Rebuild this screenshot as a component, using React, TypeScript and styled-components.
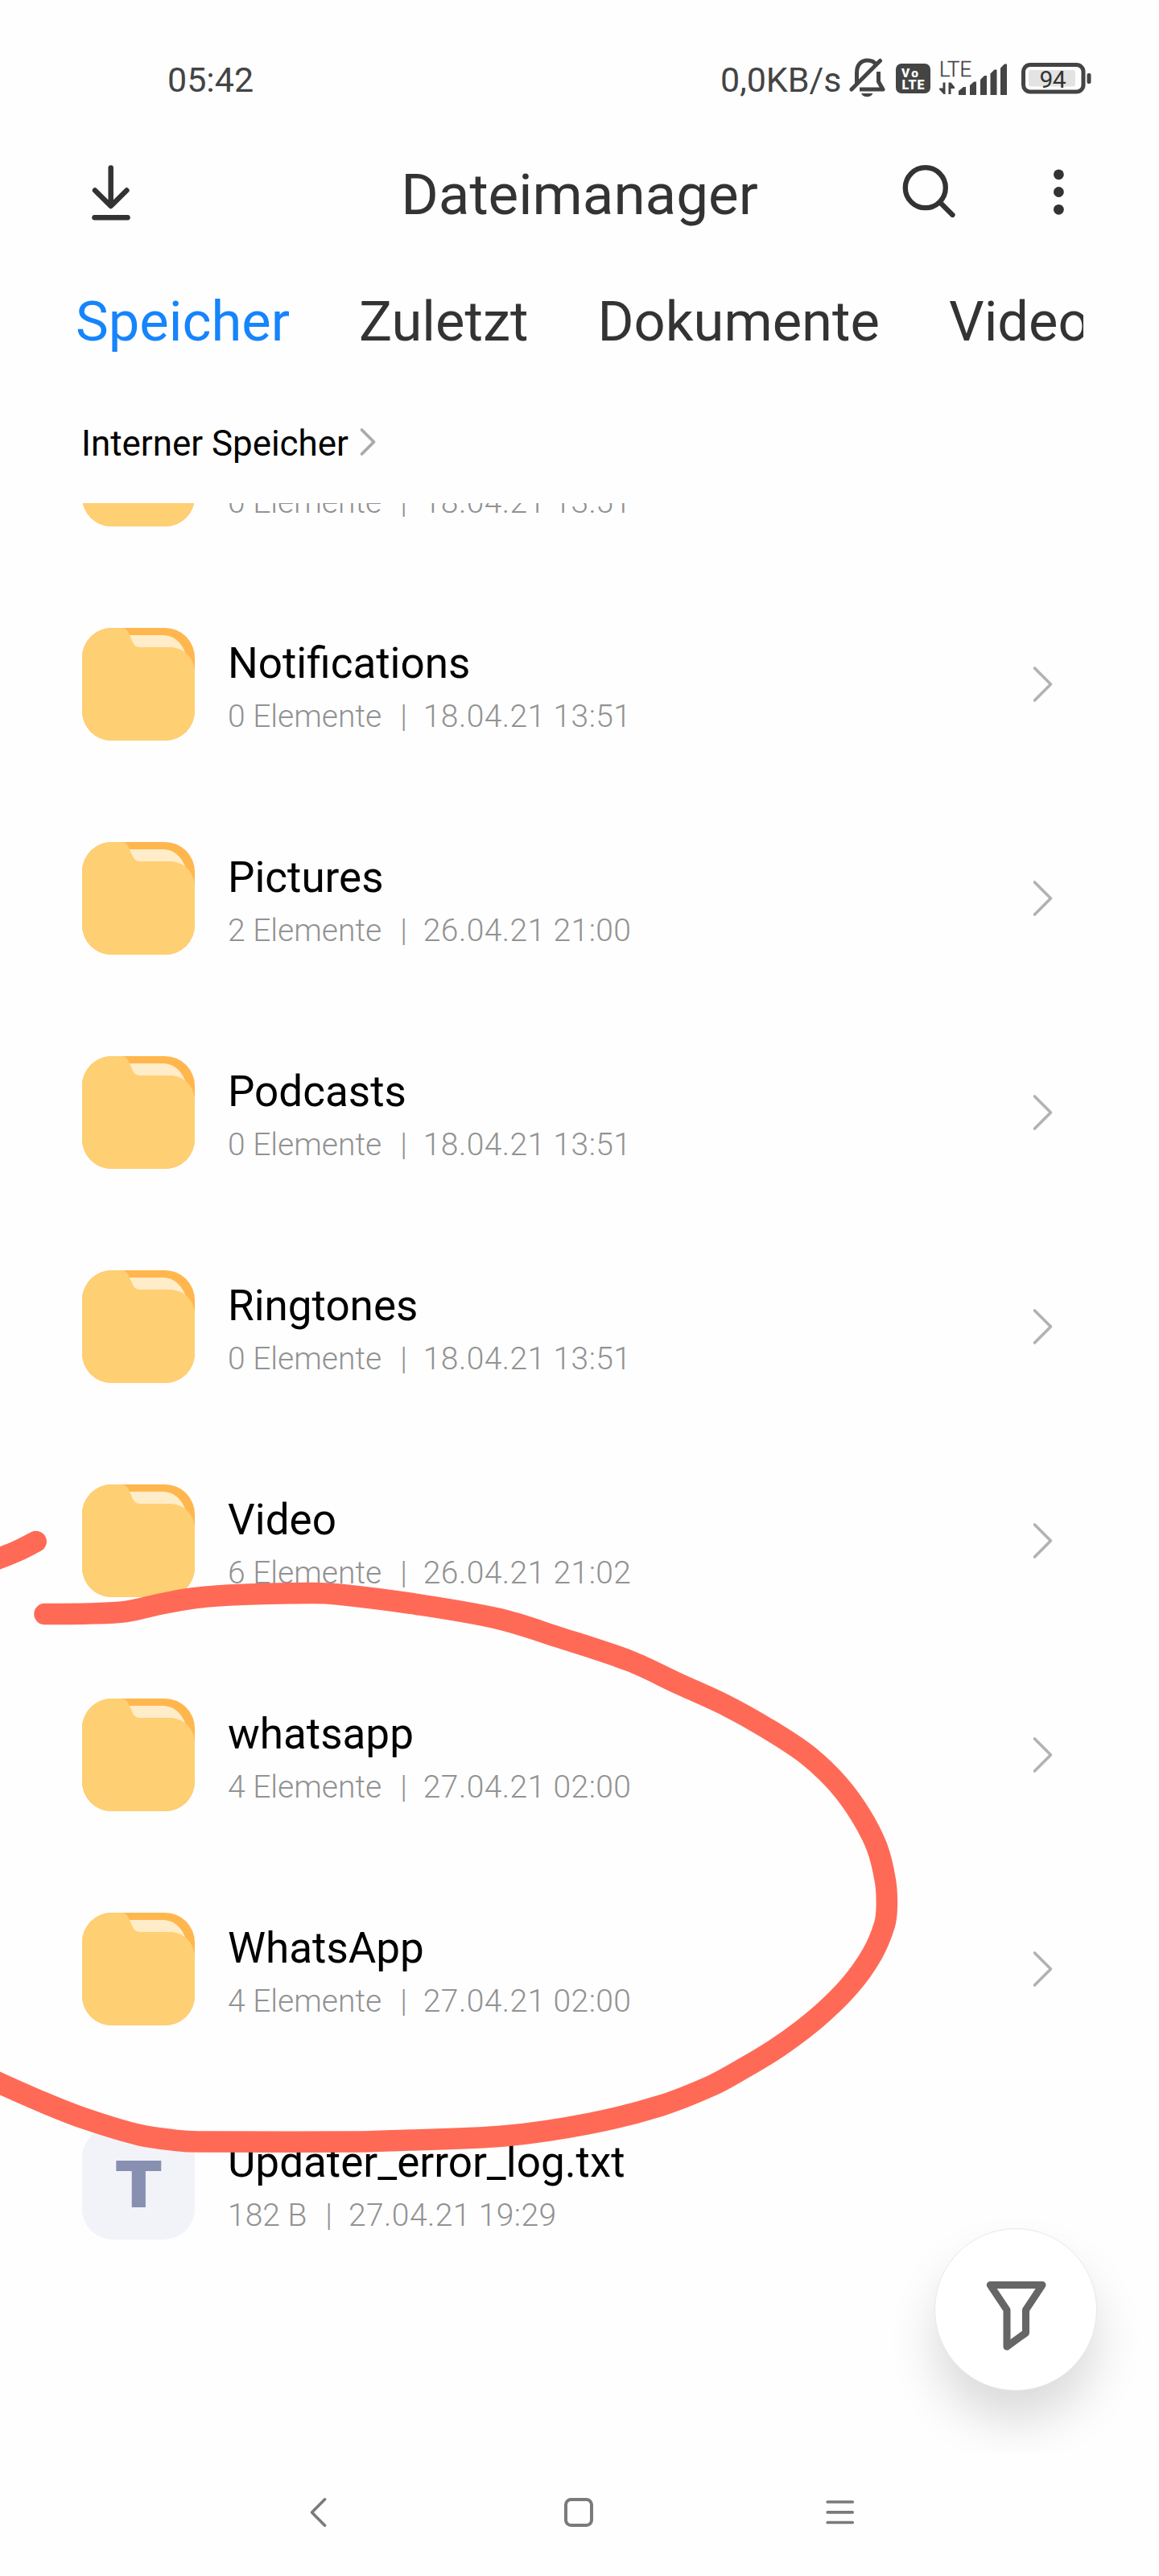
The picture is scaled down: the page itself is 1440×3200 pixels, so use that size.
import React from "react";
import styled, { createGlobalStyle } from "styled-components";

const GlobalStyle = createGlobalStyle`
  body {
    margin: 0;
    background: #fefefe;
  }
  * {
    box-sizing: border-box;
  }
`;

const Screen = styled.main`
  position: relative;
  display: flex;
  flex-direction: column;
  width: 1440px;
  height: 3200px;
  overflow: hidden;
  background: #fefefe;
  font-family: Roboto, "Liberation Sans", sans-serif;
  color: #333;

  svg {
    display: block;
    flex: none;
  }
`;

const StatusBar = styled.header`
  display: flex;
  align-items: center;
  justify-content: space-between;
  height: 160px;
  padding: 34px 84px 0 208px;
  color: #444;
`;

const StatusText = styled.span<{ $width?: number }>`
  width: ${(p) => (p.$width ? `${p.$width}px` : "auto")};
  padding-top: 4px;
  font-size: 43px;
  line-height: 52px;
  white-space: nowrap;
`;

const StatusIcons = styled.div`
  display: flex;
  align-items: center;
`;

const Spacer = styled.i<{ $width: number }>`
  width: ${(p) => p.$width}px;
`;

const AppBar = styled.div`
  display: grid;
  grid-template-columns: 1fr auto 1fr;
  align-items: center;
  height: 160px;
  padding: 0 87px;
`;

const AppBarStart = styled.div`
  padding-left: 13px;
`;

const AppBarEnd = styled.div`
  display: flex;
  justify-content: flex-end;
  gap: 86px;
`;

const Title = styled.h1`
  margin: 0;
  padding-top: 4px;
  font-size: 71px;
  font-weight: 400;
  line-height: 84px;
`;

const Tabs = styled.nav`
  display: flex;
  align-items: center;
  gap: 86px;
  height: 160px;
  margin: 0 94px 0 94px;
  overflow: hidden;
`;

const Tab = styled.span<{ $active?: boolean }>`
  flex: none;
  font-size: 68.7px;
  line-height: 100px;
  color: ${(p) => (p.$active ? "#1684fc" : "#333")};
`;

const Breadcrumb = styled.div`
  display: flex;
  align-items: center;
  gap: 13px;
  height: 145px;
  padding: 0 101px 4px;
  font-size: 43.9px;
  line-height: 52px;
  color: #000;

  svg {
    margin-bottom: 4px;
  }
`;

const ListArea = styled.section`
  position: relative;
  height: 2423px;
  overflow: hidden;
`;

const FileList = styled.ul`
  margin: -174px 0 0;
  padding: 0;
  list-style: none;
`;

const Row = styled.li`
  display: flex;
  align-items: center;
  gap: 41px;
  height: 266px;
  padding: 0 130px 0 102px;
`;

const RowText = styled.div`
  flex: 1;
  height: 140px;
  padding-top: 11px;
`;

const Name = styled.div`
  height: 66px;
  margin-bottom: 8px;
  font-size: 53px;
  line-height: 66px;
  color: #000;
`;

const Meta = styled.div`
  display: flex;
  font-size: 39px;
  font-weight: 300;
  line-height: 50px;
  white-space: pre;
  color: #929292;
`;

const Divider = styled.span`
  margin: 0 20px 0 23px;
`;

const DateText = styled.span`
  letter-spacing: 0.42px;
`;

const TextFileIcon = styled.div`
  display: flex;
  align-items: center;
  justify-content: center;
  width: 140px;
  height: 140px;
  border-radius: 38px;
  background: #f2f3f8;
  color: #8890b2;

  span {
    padding-top: 5px;
    font: bold 77px/135px "DejaVu Sans", sans-serif;
    -webkit-text-stroke: 2px #8890b2;
    transform: scaleX(1.04);
  }
`;

const FilterButton = styled.button`
  position: absolute;
  right: 77.5px;
  bottom: 78px;
  display: flex;
  align-items: center;
  justify-content: center;
  width: 202px;
  height: 202px;
  padding: 16px 0 0;
  border: 1px solid #e8e8e8;
  border-radius: 50%;
  background: #fff;
  box-shadow: 0 38px 60px rgba(0, 0, 0, 0.14);
`;

const NavBar = styled.footer`
  display: flex;
  align-items: center;
  justify-content: space-between;
  height: 152px;
  padding: 0 376px 7px 375px;
`;

const Marker = styled.svg`
  position: absolute;
  inset: 0;
  pointer-events: none;
`;

const BellOff = () => (
  <svg width="46" height="50" viewBox="0 0 46 50" fill="none" stroke="#444" strokeWidth="5">
    <path d="M9.5 31V18.5C9.5 8 15.5 3 22.5 3c5 0 9 2 11 5" />
    <path d="M36.500 17v12.500L42 39H13" strokeLinejoin="round" />
    <path d="M3 39L38.500 3.500" strokeLinecap="round" />
    <path d="M15 44h14.500c-1.500 3-4 4.300-7.200 4.300S16.500 47 15 44z" fill="#444" stroke="none" />
  </svg>
);

const VoLte = () => (
  <svg width="43" height="37" viewBox="0 0 43 37" fill="#fff" fontFamily="Roboto, sans-serif" fontWeight="900">
    <rect width="43" height="37" rx="7" fill="#444" />
    <text x="7" y="17" fontSize="15.500" textLength="21">Vo</text>
    <text x="7.500" y="32" fontSize="16" textLength="28">LTE</text>
  </svg>
);

const Signal = () => (
  <svg width="84" height="44" viewBox="0 0 84 44" fill="#444">
    <text x="0" y="19.500" fontSize="25.500" fontWeight="300" fontFamily="Roboto, sans-serif" textLength="40" lengthAdjust="spacingAndGlyphs" stroke="#444" strokeWidth="0.400">LTE</text>
    <path d="M4.500 27.500h3V42H5.500L0 36v-1.500h4.500z" />
    <path d="M11.500 27.500H14.500L19 33v2h-4.500v7h-3z" />
    <path d="M24 43v-5l6-5h3v10z" />
    <path d="M38 43V31l5-4.500h3V43z" />
    <path d="M51 43V24l5-5h3v24z" />
    <path d="M63.500 43V16.500l5-5h3V43z" />
    <path d="M76 43V9.500l5-5h3V43z" />
  </svg>
);

const Battery = () => (
  <svg width="88" height="40" viewBox="0 0 88 40">
    <rect x="3.500" y="3.500" width="74.500" height="33.500" rx="8.500" fill="none" stroke="#444" strokeWidth="5" />
    <rect x="10" y="10" width="58" height="20.500" rx="3" fill="#e3e3e3" />
    <rect x="82.500" y="14" width="5" height="13" rx="2" fill="#444" />
    <text x="23.500" y="31.500" fontSize="30" fontFamily="Roboto, sans-serif" fill="#333" textLength="33">94</text>
  </svg>
);

const DownloadIcon = () => (
  <svg width="76" height="76" viewBox="0 0 76 76" fill="none" stroke="#333" strokeWidth="6.500" strokeLinecap="round">
    <path d="M37.700 6.500V53M18 34.500L37.700 54L57.400 34.500" strokeLinejoin="round" />
    <path d="M17.500 68.300h41" />
  </svg>
);

const SearchIcon = () => (
  <svg width="76" height="76" viewBox="0 0 76 76" fill="none" stroke="#333" strokeWidth="6.300" strokeLinecap="round">
    <circle cx="34.800" cy="31.200" r="25" />
    <path d="M53.500 50L68.500 65" />
  </svg>
);

const MoreIcon = () => (
  <svg width="76" height="76" viewBox="0 0 76 76" fill="#333">
    {[14.8, 36.5, 58.3].map((cy) => (
      <circle key={cy} cx="38.400" cy={cy} r="6.400" />
    ))}
  </svg>
);

const FolderIcon = () => (
  <svg width="140" height="140" viewBox="0 0 140 140">
    <rect width="140" height="140" rx="37" fill="#ffb74d" />
    <path d="M50 9H99C115 9 125 19 130 36L128 50H60z" fill="#ffecc9" />
    <path
      d="M37 0H48C54 0 56.500 3 59 9L62.500 17C65 22.500 68 24 74 24H109C123 24 137 33 140 52V103C140 123 123 140 103 140H37C17 140 0 123 0 103V37C0 17 17 0 37 0Z"
      fill="#ffcf73"
    />
  </svg>
);

const RowChevron = () => (
  <svg width="28" height="48" viewBox="0 0 28 48" fill="none" stroke="#b2b2b2" strokeWidth="3.600" strokeLinecap="round" strokeLinejoin="round">
    <path d="M3.500 4L23.500 24L3.500 44" />
  </svg>
);

const CrumbChevron = () => (
  <svg width="22" height="36" viewBox="0 0 22 36" fill="none" stroke="#aaa" strokeWidth="3.800" strokeLinecap="round" strokeLinejoin="round">
    <path d="M3.500 3L18.500 18L3.500 33" />
  </svg>
);

const FunnelIcon = () => (
  <svg width="80" height="90" viewBox="0 0 80 90" fill="none" stroke="#666" strokeWidth="9" strokeLinejoin="round">
    <path d="M8.300 6.500H73L52.500 37.500V66L29 83V37.500z" />
  </svg>
);

const NavBack = () => (
  <svg width="40" height="40" viewBox="0 0 40 40" fill="none" stroke="#7a7a7a" strokeWidth="3.600" strokeLinecap="round" strokeLinejoin="round">
    <path d="M28.600 3.800L12.500 20L28.600 36.200" />
  </svg>
);

const NavHome = () => (
  <svg width="40" height="40" viewBox="0 0 40 40" fill="none" stroke="#7a7a7a" strokeWidth="4">
    <rect x="3" y="4" width="32" height="32" rx="6.500" />
  </svg>
);

const NavMenu = () => (
  <svg width="40" height="40" viewBox="0 0 40 40" stroke="#7a7a7a" strokeWidth="3.700" strokeLinecap="round">
    <path d="M4.200 7h31M4.200 19.800h31M4.200 32.500h31" />
  </svg>
);

type Point = [number, number];

/** Catmull-Rom curve through the points, written as cubic segments. */
function smoothPath(points: Point[]): string {
  let d = `M${points[0][0]} ${points[0][1]}`;
  for (let i = 0; i < points.length - 1; i++) {
    const a = points[Math.max(i - 1, 0)];
    const b = points[i];
    const c = points[i + 1];
    const e = points[Math.min(i + 2, points.length - 1)];
    const len = Math.hypot(c[0] - b[0], c[1] - b[1]);
    const t1x = c[0] - a[0];
    const t1y = c[1] - a[1];
    const t2x = e[0] - b[0];
    const t2y = e[1] - b[1];
    const k1 = len / 3 / (Math.hypot(t1x, t1y) || 1);
    const k2 = len / 3 / (Math.hypot(t2x, t2y) || 1);
    d += `C${b[0] + t1x * k1} ${b[1] + t1y * k1} ${c[0] - t2x * k2} ${c[1] - t2y * k2} ${c[0]} ${c[1]}`;
  }
  return d;
}

const loop: Point[] = [
  [55.5, 2005], [110, 2004.5], [156, 2002], [202, 1992], [239, 1985.5], [285, 1981.5],
  [386, 1979], [420, 1980.5], [517, 1992.8], [620, 2011], [693, 2033.5], [783, 2063.5],
  [843, 2091.5], [900, 2117.5], [953, 2147], [1003, 2180], [1040.7, 2215.7],
  [1069.3, 2254.7], [1089.7, 2295], [1100, 2336.7], [1101.8, 2368], [1099, 2391],
  [1083.7, 2427.3], [1055, 2467.7], [1015, 2506.7], [967, 2543], [920, 2571.5],
  [885, 2590.5], [820, 2616], [732, 2638], [627.6, 2653.3], [497, 2659], [444.6, 2660.5],
  [246, 2660.5], [219.7, 2659], [172.6, 2652], [104.6, 2631.5], [52.3, 2611], [0, 2588], [-30, 2574],
];

const tail: Point[] = [[-20, 1943], [0, 1935.5], [23, 1926], [44.7, 1915]];

type Entry = { name?: string; size: string; date: string; kind?: "text" };

const entries: Entry[] = [
  { size: "0 Elemente", date: "18.04.21 13:51" },
  { name: "Notifications", size: "0 Elemente", date: "18.04.21 13:51" },
  { name: "Pictures", size: "2 Elemente", date: "26.04.21 21:00" },
  { name: "Podcasts", size: "0 Elemente", date: "18.04.21 13:51" },
  { name: "Ringtones", size: "0 Elemente", date: "18.04.21 13:51" },
  { name: "Video", size: "6 Elemente", date: "26.04.21 21:02" },
  { name: "whatsapp", size: "4 Elemente", date: "27.04.21 02:00" },
  { name: "WhatsApp", size: "4 Elemente", date: "27.04.21 02:00" },
  { name: "Updater_error_log.txt", size: "182 B", date: "27.04.21 19:29", kind: "text" },
];

export default function App() {
  return (
    <>
      <GlobalStyle />
      <Screen>
        <StatusBar>
          <StatusText>05:42</StatusText>
          <StatusIcons>
            <StatusText $width={160}>0,0KB/s</StatusText>
            <BellOff />
            <Spacer $width={12} />
            <VoLte />
            <Spacer $width={11} />
            <Signal />
            <Spacer $width={17} />
            <Battery />
          </StatusIcons>
        </StatusBar>

        <AppBar>
          <AppBarStart>
            <DownloadIcon />
          </AppBarStart>
          <Title>Dateimanager</Title>
          <AppBarEnd>
            <SearchIcon />
            <MoreIcon />
          </AppBarEnd>
        </AppBar>

        <Tabs>
          <Tab $active>Speicher</Tab>
          <Tab>Zuletzt</Tab>
          <Tab>Dokumente</Tab>
          <Tab>Videos</Tab>
        </Tabs>

        <Breadcrumb>
          Interner Speicher
          <CrumbChevron />
        </Breadcrumb>

        <ListArea>
          <FileList>
            {entries.map((entry, i) => (
              <Row key={i}>
                {entry.kind === "text" ? (
                  <TextFileIcon>
                    <span>T</span>
                  </TextFileIcon>
                ) : (
                  <FolderIcon />
                )}
                <RowText>
                  <Name>{entry.name}</Name>
                  <Meta>
                    {entry.size}
                    <Divider>|</Divider>
                    <DateText>{entry.date}</DateText>
                  </Meta>
                </RowText>
                {entry.kind !== "text" && <RowChevron />}
              </Row>
            ))}
          </FileList>
          <FilterButton aria-label="Filter">
            <FunnelIcon />
          </FilterButton>
        </ListArea>

        <NavBar>
          <NavBack />
          <NavHome />
          <NavMenu />
        </NavBar>

        <Marker width="1440" height="3200" viewBox="0 0 1440 3200" fill="none" stroke="#ff6a57" strokeWidth="26.500" strokeLinecap="round" strokeLinejoin="round">
          <path d={smoothPath(loop)} />
          <path d={smoothPath(tail)} />
        </Marker>
      </Screen>
    </>
  );
}
